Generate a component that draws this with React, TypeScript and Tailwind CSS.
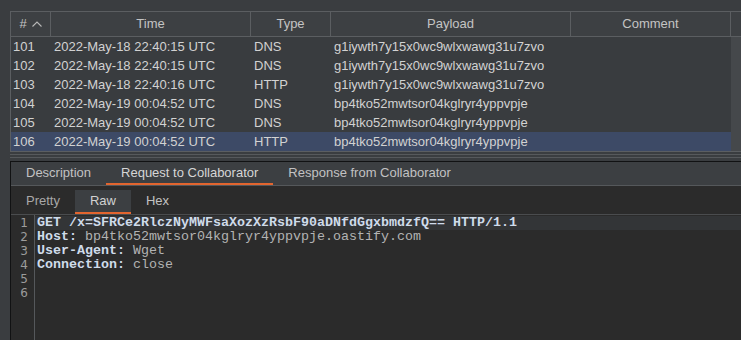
const rows = [
  ["101", "2022-May-18 22:40:15 UTC", "DNS", "g1iywth7y15x0wc9wlxwawg31u7zvo"],
  ["102", "2022-May-18 22:40:15 UTC", "DNS", "g1iywth7y15x0wc9wlxwawg31u7zvo"],
  ["103", "2022-May-18 22:40:16 UTC", "HTTP", "g1iywth7y15x0wc9wlxwawg31u7zvo"],
  ["104", "2022-May-19 00:04:52 UTC", "DNS", "bp4tko52mwtsor04kglryr4yppvpje"],
  ["105", "2022-May-19 00:04:52 UTC", "DNS", "bp4tko52mwtsor04kglryr4yppvpje"],
  ["106", "2022-May-19 00:04:52 UTC", "HTTP", "bp4tko52mwtsor04kglryr4yppvpje"],
]

const lines: [string, string][] = [
  ["GET /x=SFRCe2RlczNyMWFsaXozXzRsbF90aDNfdGgxbmdzfQ== HTTP/1.1", ""],
  ["Host:", " bp4tko52mwtsor04kglryr4yppvpje.oastify.com"],
  ["User-Agent:", " Wget"],
  ["Connection:", " close"],
  ["", ""],
  ["", ""],
]

const cols = "grid grid-cols-[40px_200px_80px_240px_160px_1fr]"

const App = () => {
  return (
    <div className="w-[741px] h-[340px] overflow-hidden bg-[#3a3d40] font-['Liberation_Sans',Arial,sans-serif] text-[13px]">
      {/* collaborator interactions table */}
      <div className="ml-[10px] pt-[11px]">
        <div className="border-l border-t border-b border-[#5b5e61]">
          <div className={`${cols} h-[25px] border-b border-[#5b5e61] bg-[#3d4043] text-[#c4c4c4]`}>
            <div className="border-r border-[#5b5e61] flex items-center justify-center gap-[5px]">
              <span>#</span>
              <svg width="10" height="6" viewBox="0 0 10 6" fill="none" stroke="#b8b8b8" strokeWidth="1.1">
                <path d="M0.5 5.5 L5 1 L9.5 5.5" />
              </svg>
            </div>
            <div className="border-r border-[#5b5e61] flex items-center justify-center">Time</div>
            <div className="border-r border-[#5b5e61] flex items-center justify-center">Type</div>
            <div className="border-r border-[#5b5e61] flex items-center justify-center">Payload</div>
            <div className="border-r border-[#5b5e61] flex items-center justify-center">Comment</div>
            <div />
          </div>
          {rows.map((r, i) => (
            <div key={r[0]} className={`${cols} h-[19px] leading-[19px] text-[#d2d2d2]`}>
              <div className={`pl-[2px] ${i === 5 ? "bg-[#3d4a66]" : "bg-[#393c3f]"}`}>{r[0]}</div>
              <div className={`pl-[3px] ${i === 5 ? "bg-[#3d4a66]" : "bg-[#393c3f]"}`}>{r[1]}</div>
              <div className={`pl-[3px] ${i === 5 ? "bg-[#3d4a66]" : "bg-[#393c3f]"}`}>{r[2]}</div>
              <div className={`pl-[3px] ${i === 5 ? "bg-[#3d4a66]" : "bg-[#393c3f]"}`}>{r[3]}</div>
              <div className={i === 5 ? "bg-[#3d4a66]" : "bg-[#393c3f]"} />
              <div className="bg-[#45484b]" />
            </div>
          ))}
        </div>
        <div className="mt-[2px] h-px bg-[#56595c]" />
        <div className="mt-[2px] h-px bg-[#56595c]" />
      </div>

      {/* lower message viewer */}
      <div className="ml-[10px] mt-[3px] border-t border-l border-[#111213]">
        <div className="flex h-[24px] bg-[#3c3f42] border-b border-[#55585b] text-[#c2c2c2]">
          <div className="px-[15px] leading-[22px]">Description</div>
          <div className="px-[15px] leading-[22px] text-[#d6d6d6] border-b-2 border-[#e2652f]">Request to Collaborator</div>
          <div className="px-[15px] leading-[22px]">Response from Collaborator</div>
        </div>
        <div className="flex h-[29px] pt-[4px] bg-[#2b2b2b] border-b border-[#4a4c4e] text-[#a8a8a8]">
          <div className="px-[15px] leading-[21px]">Pretty</div>
          <div className="px-[15px] leading-[21px] bg-[#3c3f42] text-[#d2d2d2] border-b-2 border-[#e2652f]">Raw</div>
          <div className="px-[15px] leading-[21px] text-[#c2c2c2]">Hex</div>
        </div>
        <div className="flex h-[200px] bg-[#2b2b2b]">
          <div className="w-[24px] border-r border-[#55585b] pt-[1px] pr-[6px] text-right text-[#9c9c9c] font-['DejaVu_Sans',sans-serif] text-[12px] leading-[14px]">
            {lines.map((_, i) => (
              <div key={i}>{i + 1}</div>
            ))}
          </div>
          <div className="flex-1 pt-[1px] font-['Liberation_Mono','Courier_New',monospace] text-[13.33px] leading-[14px] whitespace-pre">
            {lines.map(([k, v], i) => (
              <div key={i} className={`pl-[2px] h-[14px] ${i === 0 ? "bg-[#333537]" : ""}`}>
                <span className="font-bold text-[#cfdbea]">{k}</span>
                <span className="text-[#b3b3b3]">{v}</span>
              </div>
            ))}
          </div>
        </div>
      </div>
    </div>
  )
}

export default App
